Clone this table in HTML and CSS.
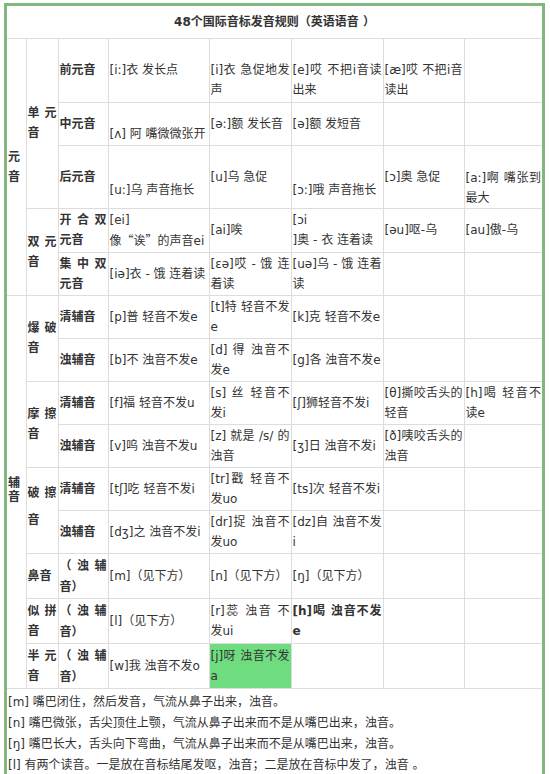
FILE: index.html
```html
<!DOCTYPE html>
<html lang="zh-CN">
<head>
<meta charset="utf-8">
<title>48个国际音标发音规则</title>
<link rel="stylesheet" href="styles.css">
</head>
<body>
<div class="frame">
<table class="grid">
<colgroup>
<col class="ca"><col class="cb"><col class="cc"><col class="cd"><col class="ce"><col class="cf"><col class="cg"><col class="ch">
</colgroup>
<tr class="h32"><td colspan="8" class="title">48个国际音标发音规则<span class="pn">（</span>英语语音 <span class="pn">）</span></td></tr>
<tr class="h64">
<td rowspan="5" class="lab">元音</td>
<td rowspan="3" class="lab">单元音</td>
<td class="lab">前元音</td>
<td>[i:]衣 发长点</td>
<td><br>[i]衣 急促地发声</td>
<td><br>[e]哎 不把i音读出来</td>
<td><br>[æ]哎 不把i音读出</td>
<td></td>
</tr>
<tr class="h43">
<td class="lab">中元音</td>
<td><br>[ʌ] 阿 嘴微微张开</td>
<td>[ə:]额 发长音</td>
<td>[ə]额 发短音</td>
<td></td>
<td></td>
</tr>
<tr class="h63">
<td class="lab">后元音</td>
<td class="low">[u:]乌 声音拖长</td>
<td>[u]乌 急促</td>
<td class="low">[ɔ:]哦 声音拖长</td>
<td>[ɔ]奥 急促</td>
<td class="bottom">[a:]啊 嘴张到最大</td>
</tr>
<tr class="h44">
<td rowspan="2" class="lab">双元音</td>
<td class="lab">开合双元音</td>
<td>[ei]<br>像<span class="cjk">“</span>诶<span class="cjk">”</span>的声音ei</td>
<td>[ai]唉</td>
<td>[ɔi<br>]奥 - 衣 连着读</td>
<td>[əu]呕-乌</td>
<td>[au]傲-乌</td>
</tr>
<tr class="h43">
<td class="lab">集中双元音</td>
<td>[iə]衣 - 饿 连着读</td>
<td>[εə]哎 - 饿 连着读</td>
<td>[uə]乌 - 饿 连着读</td>
<td></td>
<td></td>
</tr>
<tr class="h43">
<td rowspan="9" class="lab tight">辅音</td>
<td rowspan="2" class="lab">爆破音</td>
<td class="lab">清辅音</td>
<td>[p]普 轻音不发e</td>
<td>[t]特 轻音不发e</td>
<td>[k]克 轻音不发e</td>
<td></td>
<td></td>
</tr>
<tr class="h43">
<td class="lab">浊辅音</td>
<td>[b]不 浊音不发e</td>
<td>[d] 得 浊音不发e</td>
<td>[g]各 浊音不发e</td>
<td></td>
<td></td>
</tr>
<tr class="h43">
<td rowspan="2" class="lab">摩擦音</td>
<td class="lab">清辅音</td>
<td>[f]福 轻音不发u</td>
<td>[s] 丝 轻音不发i</td>
<td>[ʃ]狮轻音不发i</td>
<td>[θ]撕咬舌头的轻音</td>
<td>[h]喝 轻音不读e</td>
</tr>
<tr class="h43">
<td class="lab">浊辅音</td>
<td>[v]呜 浊音不发u</td>
<td>[z] 就是 /s/ 的浊音</td>
<td>[ʒ]日 浊音不发i</td>
<td>[ð]咦咬舌头的浊音</td>
<td></td>
</tr>
<tr class="h43">
<td rowspan="2" class="lab wide">破擦音</td>
<td class="lab">清辅音</td>
<td>[tʃ]吃 轻音不发i</td>
<td>[tr]戳 轻音不发uo</td>
<td>[ts]次 轻音不发i</td>
<td></td>
<td></td>
</tr>
<tr class="h43">
<td class="lab">浊辅音</td>
<td>[dʒ]之 浊音不发i</td>
<td>[dr]捉 浊音不发uo</td>
<td>[dz]自 浊音不发i</td>
<td></td>
<td></td>
</tr>
<tr class="h43">
<td class="lab">鼻音</td>
<td class="lab"><span class="pn">（</span>浊辅音<span class="pn">）</span></td>
<td>[m]<span class="pn">（</span>见下方<span class="pn">）</span></td>
<td>[n]<span class="pn">（</span>见下方<span class="pn">）</span></td>
<td>[ŋ]<span class="pn">（</span>见下方<span class="pn">）</span></td>
<td></td>
<td></td>
</tr>
<tr class="h43">
<td class="lab">似拼音</td>
<td class="lab"><span class="pn">（</span>浊辅音<span class="pn">）</span></td>
<td>[l]<span class="pn">（</span>见下方<span class="pn">）</span></td>
<td>[r]蕊 浊音 不发ui</td>
<td class="strong">[h]喝 浊音不发e</td>
<td></td>
<td></td>
</tr>
<tr class="h43">
<td class="lab">半元音</td>
<td class="lab"><span class="pn">（</span>浊辅音<span class="pn">）</span></td>
<td>[w]我 浊音不发o</td>
<td class="hl">[j]呀 浊音不发a</td>
<td></td>
<td></td>
<td></td>
</tr>
<tr class="h85">
<td colspan="8" class="notes">[m] 嘴巴闭住<span class="pn">，</span>然后发音<span class="pn">，</span>气流从鼻子出来<span class="pn">，</span>浊音<span class="pn">。</span><br>[n] 嘴巴微张<span class="pn">，</span>舌尖顶住上颚<span class="pn">，</span>气流从鼻子出来而不是从嘴巴出来<span class="pn">，</span>浊音<span class="pn">。</span><br>[ŋ] 嘴巴长大<span class="pn">，</span>舌头向下弯曲<span class="pn">，</span>气流从鼻子出来而不是从嘴巴出来<span class="pn">，</span>浊音<span class="pn">。</span><br>[l] 有两个读音<span class="pn">。</span>一是放在音标结尾发呕<span class="pn">，</span>浊音<span class="pn">；</span>二是放在音标中发了<span class="pn">，</span>浊音 <span class="pn">。</span></td>
</tr>
</table>
</div>
</body>
</html>
```
FILE: styles.css
```css
html, body {
  margin: 0;
  padding: 0;
  background: #ffffff;
}

body {
  font-family: "DejaVu Sans", "Noto Sans CJK SC", sans-serif;
  font-size: 12px;
  color: #333333;
}

.frame {
  margin: 3px 0 0 4px;
  width: 541px;
  box-sizing: border-box;
  border: 3px solid #80b880;
}

.grid {
  width: 535px;
  table-layout: fixed;
  border-collapse: collapse;
  border-style: hidden;
}

.ca { width: 19px; }
.cb { width: 32px; }
.cc { width: 50px; }
.cd { width: 101px; }
.ce { width: 82px; }
.cf { width: 92px; }
.cg { width: 81px; }
.ch { width: 78px; }

.grid td {
  border: 1px solid #dddddd;
  padding: 1px;
  line-height: 20px;
  vertical-align: middle;
  text-align: justify;
  word-break: normal;
  overflow: hidden;
}

.h32 { height: 32px; }
.h43 { height: 43px; }
.h44 { height: 44px; }
.h63 { height: 63px; }
.h64 { height: 64px; }
.h85 { height: 85px; }

.grid td.title {
  text-align: center;
  font-weight: bold;
}

.grid td.lab {
  font-weight: bold;
}

.grid td.strong {
  font-weight: bold;
}

.grid td.low {
  vertical-align: bottom;
  padding-bottom: 8px;
}

.grid td.bottom {
  vertical-align: bottom;
  padding-bottom: 0;
}

.grid td.tight {
  line-height: 14px;
  padding-bottom: 5px;
}

.grid td.wide {
  line-height: 27px;
  padding-bottom: 7px;
}

.grid td.hl {
  background: #6fdc80;
}

.grid td.notes {
  text-align: left;
  padding: 2px 1px;
}

.cjk {
  font-family: "Noto Sans CJK SC", sans-serif;
}

.pn {
  font-family: "Noto Sans CJK KR", sans-serif;
}
```
